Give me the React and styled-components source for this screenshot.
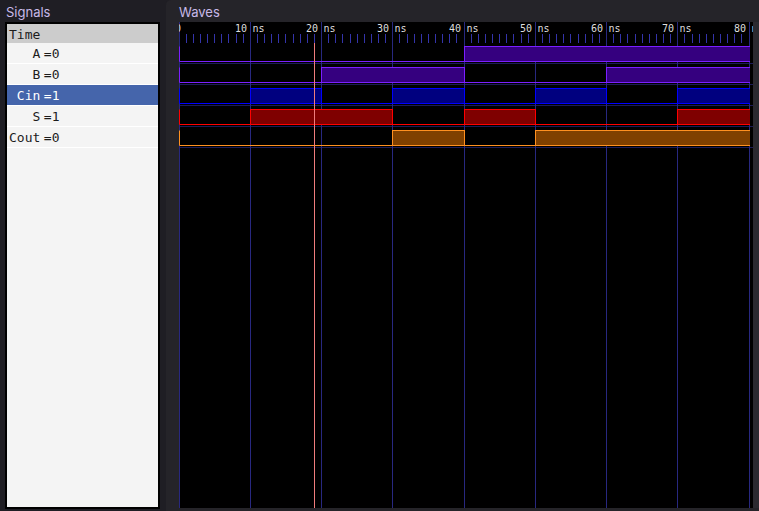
import React from "react";
import styled, { createGlobalStyle } from "styled-components";

const Global = createGlobalStyle`
  html, body { margin: 0; padding: 0; background: #1f1e24; }
  #root { width: 759px; height: 511px; overflow: hidden; }
`;

const Shell = styled.div`
  display: flex;
  width: 759px;
  height: 511px;
  background: #1f1e24;
`;

const LeftPane = styled.div`
  width: 166px;
  display: flex;
  flex-direction: column;
  padding: 0 6px 2px 5px;
  box-sizing: border-box;
`;

const RightPane = styled.div`
  flex: 1;
  display: flex;
  flex-direction: column;
  background: #252429;
  border-top-left-radius: 5px;
`;

const PaneTitle = styled.div`
  height: 22px;
  line-height: 24px;
  padding-left: ${(p) => p.$indent}px;
  font-family: Inter, "Noto Sans", sans-serif;
  font-size: 13px;
  color: #c8b9e8;
  box-sizing: border-box;
`;

const ListBox = styled.div`
  flex: 1;
  border: 2px solid #000;
  background: #f4f4f4;
  display: flex;
  flex-direction: column;
  font-family: "DejaVu Sans Mono", "Liberation Mono", monospace;
  font-size: 13px;
  color: #1c1c1c;
`;

const HeaderRow = styled.div`
  height: 19px;
  line-height: 22px;
  background: #cccccc;
  padding-left: 2px;
  overflow: hidden;
`;

const SignalRow = styled.div`
  height: 20px;
  line-height: 22px;
  border-bottom: 1px solid #ffffff;
  padding-left: 2px;
  display: grid;
  grid-template-columns: 4ch auto;
  column-gap: 3.5px;
  overflow: hidden;
  background: ${(p) => (p.$selected ? "#4565ab" : "#f4f4f4")};
  color: ${(p) => (p.$selected ? "#ffffff" : "#1c1c1c")};
`;

const SigName = styled.span`
  text-align: right;
  white-space: pre;
`;

const WaveBody = styled.div`
  flex: 1;
  display: flex;
  padding-left: 13px;
  margin-bottom: 3px;
`;

const Canvas = styled.div`
  width: 574px;
  background: #000;
  overflow: hidden;
`;

const Scrollbar = styled.div`
  flex: 1;
  background: #2b2a30;
`;

const signals = [
  { name: "A", val: "0", bits: [0, 0, 0, 0, 1, 1, 1, 1], fill: "#35007f", stroke: "#7b1fff" },
  { name: "B", val: "0", bits: [0, 0, 1, 1, 0, 0, 1, 1], fill: "#35007f", stroke: "#7b1fff" },
  { name: "Cin", val: "1", bits: [0, 1, 0, 1, 0, 1, 0, 1], fill: "#00007f", stroke: "#0000ff", selected: true },
  { name: "S", val: "1", bits: [0, 1, 1, 0, 1, 0, 0, 1], fill: "#7f0000", stroke: "#ff0000" },
  { name: "Cout", val: "0", bits: [0, 0, 0, 1, 0, 1, 1, 1], fill: "#7f4000", stroke: "#ff9020" },
];

const W = 574;
const H = 486;
const END = 571;
const xt = (t) => Math.floor(t * 7.125) + 0.5;
const rowTop = (i) => 21 + 21 * i;

function segments(bits) {
  const segs = [];
  bits.forEach((b, k) => {
    const last = segs[segs.length - 1];
    if (last && last.v === b) last.t2 = (k + 1) * 10;
    else segs.push({ v: b, t1: k * 10, t2: (k + 1) * 10 });
  });
  return segs;
}

function WaveChart() {
  const ticks = [];
  for (let t = 0; t <= 80; t++) {
    if (t % 10 !== 0) ticks.push(t);
  }
  const majors = [0, 10, 20, 30, 40, 50, 60, 70, 80];
  return (
    <svg width={W} height={H} style={{ display: "block" }}>
      <defs>
        <clipPath id="waveclip">
          <rect x="0" y="0" width={END} height={H} />
        </clipPath>
      </defs>
      {signals.map((s, i) => (
        <line key={"h" + i} x1="0" x2={W} y1={rowTop(i) + 20.5} y2={rowTop(i) + 20.5} stroke="#1c1c58" strokeWidth="1" />
      ))}
      {majors.map((t) => (
        <line key={"m" + t} x1={xt(t)} x2={xt(t)} y1="0" y2={H} stroke="#282880" strokeWidth="1" />
      ))}
      {ticks.map((t) => (
        <line key={"t" + t} x1={xt(t)} x2={xt(t)} y1="12" y2="21" stroke="#3434aa" strokeWidth="1" />
      ))}
      <g fontFamily="'DejaVu Sans Mono', 'Liberation Mono', monospace" fontSize="10" fill="#dedede">
        <text x="2" y="10" textAnchor="end">0</text>
        {majors.slice(1).map((t) => (
          <React.Fragment key={"l" + t}>
            <text x={xt(t) - 3.5} y="10" textAnchor="end">{t}</text>
            <text x={xt(t) + 2} y="10">ns</text>
          </React.Fragment>
        ))}
      </g>
      <g clipPath="url(#waveclip)">
        {signals.map((s, i) => {
          const top = rowTop(i);
          const hi = top + 3.5;
          const lo = top + 18.5;
          const segs = segments(s.bits);
          return (
            <g key={"w" + i}>
              <line x1="0.5" x2="0.5" y1={hi} y2={lo} stroke={s.stroke} />
              {segs.map((g, k) => {
                const x1 = xt(g.t1);
                const x2 = g.t2 === 80 ? END + 4 : xt(g.t2);
                return g.v ? (
                  <rect key={k} x={x1} y={hi} width={x2 - x1} height={lo - hi} fill={s.fill} stroke={s.stroke} />
                ) : (
                  <line key={k} x1={x1} x2={x2} y1={lo} y2={lo} stroke={s.stroke} />
                );
              })}
            </g>
          );
        })}
      </g>
      <line x1="135.5" x2="135.5" y1="21" y2={H} stroke="#f07c7c" strokeWidth="1" />
    </svg>
  );
}

export default function App() {
  return (
    <>
      <Global />
      <Shell>
        <LeftPane>
          <PaneTitle $indent={1}>Signals</PaneTitle>
          <ListBox>
            <HeaderRow>Time</HeaderRow>
            {signals.map((s) => (
              <SignalRow key={s.name} $selected={s.selected}>
                <SigName>{s.name}</SigName>
                <span>={s.val}</span>
              </SignalRow>
            ))}
          </ListBox>
        </LeftPane>
        <RightPane>
          <PaneTitle $indent={13}>Waves</PaneTitle>
          <WaveBody>
            <Canvas>
              <WaveChart />
            </Canvas>
            <Scrollbar />
          </WaveBody>
        </RightPane>
      </Shell>
    </>
  );
}
